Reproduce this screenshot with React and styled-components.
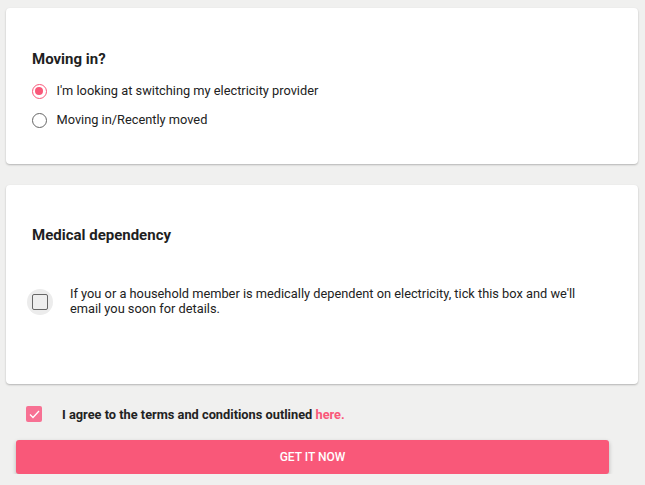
import React from 'react'
import styled, { createGlobalStyle } from 'styled-components'

const pink = '#f95879'

const Global = createGlobalStyle`
  html, body {
    margin: 0;
    background: #f0f0ef;
    font-family: Roboto, "Liberation Sans", sans-serif;
    color: #222;
  }
`

const Page = styled.div`
  padding: 8px 7px 0 6px;
  display: flex;
  flex-direction: column;
`

const Card = styled.div`
  background: #fff;
  border-radius: 4px;
  box-shadow: 0 1px 2px rgba(0, 0, 0, 0.25);
  padding: ${p => p.$pad};
  margin-bottom: 21px;
  height: ${p => p.$h}px;
  box-sizing: border-box;
`

const Title = styled.h3`
  margin: 0;
  font-size: 15px;
  font-weight: 700;
  line-height: 20px;
  color: #1f1f1f;
`

const Options = styled.div`
  display: flex;
  flex-direction: column;
  gap: 11px;
  margin-top: 13px;
`

const Option = styled.label`
  display: flex;
  align-items: center;
  gap: 10px;
  font-size: 12.8px;
  line-height: 18px;
  color: #222;
`

const Radio = styled.span`
  width: 15px;
  height: 15px;
  margin-left: -0.5px;
  border-radius: 50%;
  box-sizing: border-box;
  border: 1.5px solid ${p => (p.$on ? pink : '#666')};
  display: flex;
  align-items: center;
  justify-content: center;
  &::after {
    content: '';
    width: 8px;
    height: 8px;
    border-radius: 50%;
    background: ${p => (p.$on ? pink : 'transparent')};
  }
`

const MedRow = styled.div`
  display: flex;
  align-items: center;
  margin-top: 42px;
`

const Halo = styled.span`
  flex: none;
  width: 26px;
  height: 26px;
  margin-left: -5px;
  border-radius: 50%;
  background: #ececec;
  display: flex;
  align-items: center;
  justify-content: center;
`

const Box = styled.span`
  width: 16px;
  height: 16px;
  box-sizing: border-box;
  border: 1.5px solid #666;
  border-radius: 2px;
  background: #eee;
`

const MedText = styled.p`
  margin: 0 0 0 17px;
  font-size: 12.8px;
  line-height: 14.5px;
  color: #222;
  max-width: 520px;
`

const Terms = styled.div`
  display: flex;
  align-items: center;
  padding: 0 0 0 20px;
  margin-top: 0;
  height: 18px;
`

const Check = styled.span`
  width: 16px;
  height: 16px;
  border-radius: 2px;
  background: #f77193;
  display: flex;
  align-items: center;
  justify-content: center;
`

const TermsText = styled.span`
  margin-left: 20px;
  font-size: 12.8px;
  font-weight: 700;
  color: #222;
  a {
    color: ${pink};
    text-decoration: none;
  }
`

const Button = styled.button`
  margin: 17px 29px 0 10px;
  height: 34px;
  border: none;
  border-radius: 3px;
  background: ${pink};
  color: #fff;
  font-family: Roboto, "Liberation Sans", sans-serif;
  font-size: 12px;
  font-weight: 500;
  box-shadow: 0 2px 4px rgba(0, 0, 0, 0.25);
`

export default function App() {
  return (
    <>
      <Global />
      <Page>
        <Card $pad="41px 26px 0" $h={156}>
          <Title>Moving in?</Title>
          <Options>
            <Option><Radio $on />I'm looking at switching my electricity provider</Option>
            <Option><Radio />Moving in/Recently moved</Option>
          </Options>
        </Card>
        <Card $pad="40px 26px 0" $h={199}>
          <Title>Medical dependency</Title>
          <MedRow>
            <Halo><Box /></Halo>
            <MedText>
              If you or a household member is medically dependent on electricity, tick this box and we'll email you soon for details.
            </MedText>
          </MedRow>
        </Card>
        <Terms>
          <Check>
            <svg width="11" height="9" viewBox="0 0 11 9">
              <path d="M1 4.5 L4 7.5 L10 1" fill="none" stroke="#fff" strokeWidth="1.3" />
            </svg>
          </Check>
          <TermsText>I agree to the terms and conditions outlined <a href="#">here.</a></TermsText>
        </Terms>
        <Button>GET IT NOW</Button>
      </Page>
    </>
  )
}
